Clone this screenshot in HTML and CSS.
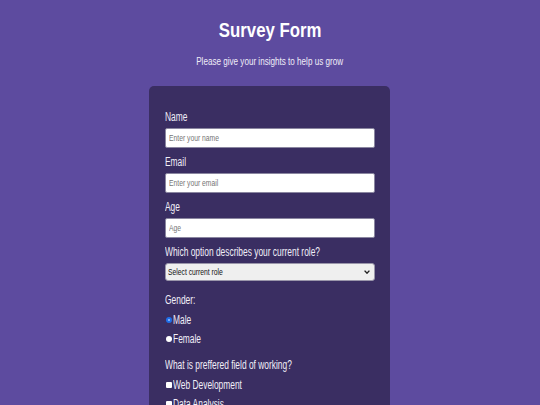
FILE: index.html
```html
<!DOCTYPE html>
<html lang="en">
<head>
<meta charset="utf-8">
<title>Survey Form</title>
<link rel="stylesheet" href="styles.css">
</head>
<body>
<header class="head">
  <h1 class="title"><span class="sx-c t-title">Survey Form</span></h1>
  <p class="subtitle"><span class="sx-c t-sub">Please give your insights to help us grow</span></p>
</header>
<form class="card">
  <div class="field">
    <label class="label"><span class="sx">Name</span></label>
    <div class="text"><span class="ph">Enter your name</span></div>
  </div>
  <div class="field">
    <label class="label"><span class="sx">Email</span></label>
    <div class="text"><span class="ph">Enter your email</span></div>
  </div>
  <div class="field">
    <label class="label"><span class="sx">Age</span></label>
    <div class="text"><span class="ph">Age</span></div>
  </div>
  <div class="field">
    <label class="label"><span class="sx">Which option describes your current role?</span></label>
    <div class="select">
      <span class="ph dark">Select current role</span>
      <svg class="chev" width="6" height="4" viewBox="0 0 6 4"><path d="M0.6 0.6 L3 3.2 L5.4 0.6" fill="none" stroke="#222" stroke-width="1.4"/></svg>
    </div>
  </div>
  <div class="group">
    <p class="label"><span class="sx">Gender:</span></p>
    <div class="opt"><span class="radio checked"></span><span class="sx">Male</span></div>
    <div class="opt"><span class="radio"></span><span class="sx">Female</span></div>
  </div>
  <div class="group">
    <p class="label"><span class="sx">What is preffered field of working?</span></p>
    <div class="opt"><span class="check"></span><span class="sx">Web Development</span></div>
    <div class="opt"><span class="check"></span><span class="sx">Data Analysis</span></div>
  </div>
</form>
</body>
</html>
```

FILE: styles.css
```css
* { box-sizing: border-box; }
html, body { margin: 0; padding: 0; }
body {
  background: #5d4b9f;
  font-family: "Liberation Sans", Arial, sans-serif;
  color: #ffffff;
  height: 405px;
  overflow: hidden;
}
.sx {
  display: inline-block;
  white-space: nowrap;
  transform: scaleX(0.7);
  transform-origin: 0 50%;
}
.sx-c {
  display: inline-block;
  white-space: nowrap;
  transform-origin: 50% 50%;
}
.t-title { transform: scaleX(0.8); }
.t-sub { transform: scaleX(0.81); }
.head { text-align: center; padding-top: 18px; }
.title {
  margin: 0;
  font-size: 21px;
  line-height: 24px;
  font-weight: bold;
}
.subtitle {
  margin: 14px 0 0;
  font-size: 10px;
  line-height: 12px;
  color: #f0edf8;
}
.card {
  width: 241px;
  margin: 18px 0 0 149px;
  background: #3a2e62;
  border-radius: 5px;
  padding: 24px 15px 20px 16px;
}
.field { margin-bottom: 7px; }
.label {
  display: block;
  margin: 0 0 4px;
  font-size: 12px;
  line-height: 14px;
  color: #f1eef8;
  white-space: nowrap;
}
.text {
  display: flex;
  align-items: center;
  width: 210px;
  height: 20px;
  padding: 0 3px;
  border: 1px solid #8a86a0;
  border-radius: 2px;
  background: #fff;
  overflow: hidden;
}
.ph {
  display: inline-block;
  white-space: nowrap;
  font-size: 9px;
  line-height: 10px;
  color: #757575;
  transform: scaleX(0.75);
  transform-origin: 0 50%;
}
.ph.dark { color: #111; }
.select {
  display: flex;
  align-items: center;
  justify-content: space-between;
  width: 210px;
  height: 18px;
  padding: 0 4px 0 2px;
  background: #efefef;
  border: 1px solid #9a96aa;
  border-radius: 3px;
}
.chev { display: block; }
.group { margin-top: 12px; }
.group .label { margin-bottom: 6px; }
.opt {
  display: flex;
  align-items: center;
  gap: 1px;
  margin: 0 0 5px 1px;
  font-size: 12px;
  line-height: 14px;
  color: #f1eef8;
}
.radio {
  flex: none;
  width: 6px;
  height: 6px;
  border-radius: 50%;
  background: #fff;
}
.radio.checked {
  background: #9cc3ff;
  border: 2px solid #1f6fe8;
}
.check {
  flex: none;
  width: 6px;
  height: 6px;
  background: #fff;
  border-radius: 1px;
}
```
